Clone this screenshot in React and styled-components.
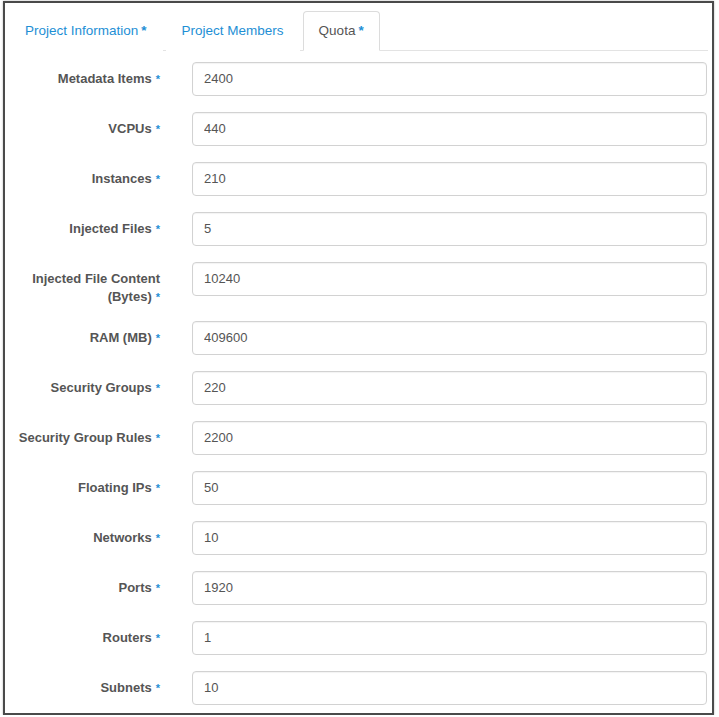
import React from "react";
import styled, { createGlobalStyle } from "styled-components";

const quotas = [
  { label: "Metadata Items", value: "2400" },
  { label: "VCPUs", value: "440" },
  { label: "Instances", value: "210" },
  { label: "Injected Files", value: "5" },
  { label: "Injected File Content (Bytes)", value: "10240" },
  { label: "RAM (MB)", value: "409600" },
  { label: "Security Groups", value: "220" },
  { label: "Security Group Rules", value: "2200" },
  { label: "Floating IPs", value: "50" },
  { label: "Networks", value: "10" },
  { label: "Ports", value: "1920" },
  { label: "Routers", value: "1" },
  { label: "Subnets", value: "10" },
];

const tabs = [
  { name: "Project Information", required: true },
  { name: "Project Members", required: false },
  { name: "Quota", required: true, active: true },
];

const GlobalStyle = createGlobalStyle`
  body {
    margin: 0;
    background: #fff;
    font-family: "Liberation Sans", Arial, Helvetica, sans-serif;
    font-size: 13px;
  }
`;

const Frame = styled.div`
  box-sizing: border-box;
  margin: 1px 0 0 3px;
  width: 711px;
  height: 714px;
  border: 2px solid #4a4a4a;
  background: #fff;
  padding: 8px 4px 0 4px;
  box-shadow: 0 0 2px rgba(0, 0, 0, 0.3);
`;

const TabBar = styled.ul`
  display: flex;
  list-style: none;
  margin: 0;
  padding: 0;
  border-bottom: 1px solid #e3e3e3;
  height: 39px;
`;

const Tab = styled.li`
  box-sizing: border-box;
  margin: 0 3px -1px 0;
  height: 40px;
  padding: 0 15px 1px;
  display: flex;
  align-items: center;
  color: ${(p) => (p.$active ? "#555" : "#1e8fd5")};
  background: #fff;
  border: 1px solid ${(p) => (p.$active ? "#dcdcdc" : "transparent")};
  border-bottom-color: ${(p) => (p.$active ? "#fff" : "transparent")};
  border-radius: 4px 4px 0 0;
  font-size: 13.5px;
  white-space: pre;
`;

const Star = styled.span`
  color: #1e8fd5;
  font-weight: bold;
  font-size: ${(p) => (p.$small ? "11px" : "inherit")};
  margin-left: ${(p) => (p.$small ? "4px" : "3px")};
`;

const Form = styled.div`
  padding: 11px 1px 0 8px;
`;

const Row = styled.div`
  display: flex;
  align-items: flex-start;
  margin-bottom: 16px;
`;

const Label = styled.label`
  box-sizing: border-box;
  width: 143px;
  flex-shrink: 0;
  padding-top: 8px;
  margin-bottom: -1px;
  text-align: right;
  font-weight: bold;
  color: #555;
  line-height: 18px;
`;

const Input = styled.input`
  box-sizing: border-box;
  flex: 1;
  margin-left: 32px;
  height: 34px;
  padding: 5px 11px 7px;
  border: 1px solid #d2d2d2;
  border-radius: 4px;
  font-family: inherit;
  font-size: 13px;
  color: #555;
  box-shadow: inset 0 1px 1px rgba(0, 0, 0, 0.05);
  outline: none;
`;

export default function App() {
  return (
    <>
      <GlobalStyle />
      <Frame>
        <TabBar>
          {tabs.map((t) => (
            <Tab key={t.name} $active={t.active}>
              {t.name}
              {t.required && <Star>*</Star>}
            </Tab>
          ))}
        </TabBar>
        <Form>
          {quotas.map((q) => (
            <Row key={q.label}>
              <Label>
                {q.label}
                <Star $small>*</Star>
              </Label>
              <Input defaultValue={q.value} />
            </Row>
          ))}
        </Form>
      </Frame>
    </>
  );
}
